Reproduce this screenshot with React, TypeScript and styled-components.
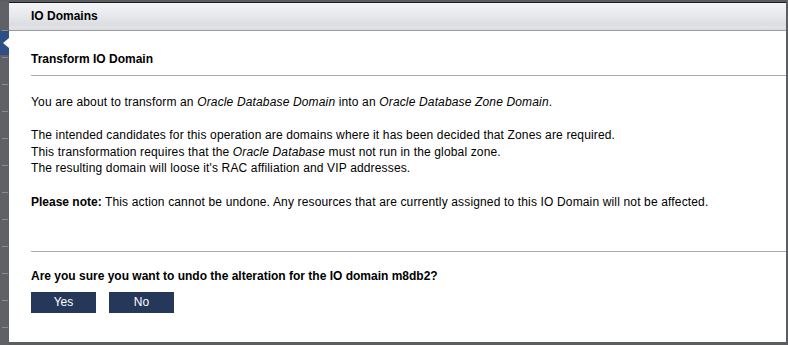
import styled, { createGlobalStyle } from "styled-components";

const GlobalStyle = createGlobalStyle`
  html, body {
    margin: 0;
    padding: 0;
    background: #5c5d61;
    overflow: hidden;
  }
  body {
    font-family: "Liberation Sans", Arial, sans-serif;
    font-size: 12px;
    color: #000;
  }
`;

const Page = styled.div`
  display: flex;
  width: 788px;
  height: 345px;
  padding-top: 2px;
  box-sizing: border-box;
  background: #5c5d61;
`;

const Rail = styled.div`
  position: relative;
  width: 9px;
  flex: none;
  background:
    repeating-linear-gradient(
      to bottom,
      transparent 0px,
      transparent 26px,
      #8b8d92 26px,
      #8b8d92 27px
    ) 2px 2px / 6px 100% no-repeat,
    #5f6166;
`;

const RailActive = styled.div`
  position: absolute;
  left: 0;
  top: 29px;
  width: 9px;
  height: 24px;
  background: #2d4f86;
  display: flex;
  align-items: center;
  justify-content: flex-end;
`;

const Notch = styled.div`
  width: 0;
  height: 0;
  border-top: 5px solid transparent;
  border-bottom: 5px solid transparent;
  border-right: 6px solid #ffffff;
`;

const Dialog = styled.div`
  width: 777px;
  height: 340px;
  flex: none;
  background: #fff;
  border-top: 1px solid #1c1c1c;
  box-sizing: border-box;
  display: flex;
  flex-direction: column;
`;

const Header = styled.div`
  height: 27px;
  line-height: 27px;
  padding-left: 22px;
  font-weight: bold;
  background: linear-gradient(
    to bottom,
    #f3f4f8 0%,
    #e8e9ed 45%,
    #dcdde1 80%,
    #e2e3e6 90%,
    #d9dadd 100%
  );
  border-bottom: 1px solid #9c9c9c;
`;

const Body = styled.div`
  padding: 20px 0 0 22px;
`;

const Title = styled.div`
  font-weight: bold;
  line-height: 16px;
`;

const Rule = styled.div<{ $gap: number }>`
  height: 1px;
  background: #ababab;
  margin-top: ${(p) => p.$gap}px;
`;

const Para = styled.p<{ $gap?: number }>`
  margin: ${(p) => p.$gap ?? 17}px 0 0;
  line-height: 16.5px;
  letter-spacing: 0.15px;

  b {
    letter-spacing: 0;
  }
`;

const Question = styled.div`
  margin-top: 16px;
  font-weight: bold;
  line-height: 16.5px;
`;

const Buttons = styled.div`
  display: flex;
  gap: 13px;
  margin-top: 7px;
`;

const Button = styled.button`
  width: 65px;
  height: 21px;
  padding: 0;
  border: none;
  background: #26385a;
  color: #fff;
  font-family: "Liberation Sans", Arial, sans-serif;
  font-size: 12px;
  cursor: pointer;
`;

export default function App() {
  return (
    <>
      <GlobalStyle />
      <Page>
        <Rail>
          <RailActive>
            <Notch />
          </RailActive>
        </Rail>
        <Dialog>
          <Header>IO Domains</Header>
          <Body>
            <Title>Transform IO Domain</Title>
            <Rule $gap={8} />
            <Para $gap={17.5}>
              You are about to transform an <i>Oracle Database Domain</i> into
              an <i>Oracle Database Zone Domain</i>.
            </Para>
            <Para>
              The intended candidates for this operation are domains where it
              has been decided that Zones are required.
              <br />
              This transformation requires that the <i>Oracle Database</i> must
              not run in the global zone.
              <br />
              The resulting domain will loose it's RAC affiliation and VIP
              addresses.
            </Para>
            <Para>
              <b>Please note:</b> This action cannot be undone. Any resources
              that are currently assigned to this IO Domain will not be
              affected.
            </Para>
            <Rule $gap={41} />
            <Question>
              Are you sure you want to undo the alteration for the IO domain
              m8db2?
            </Question>
            <Buttons>
              <Button>Yes</Button>
              <Button>No</Button>
            </Buttons>
          </Body>
        </Dialog>
      </Page>
    </>
  );
}
